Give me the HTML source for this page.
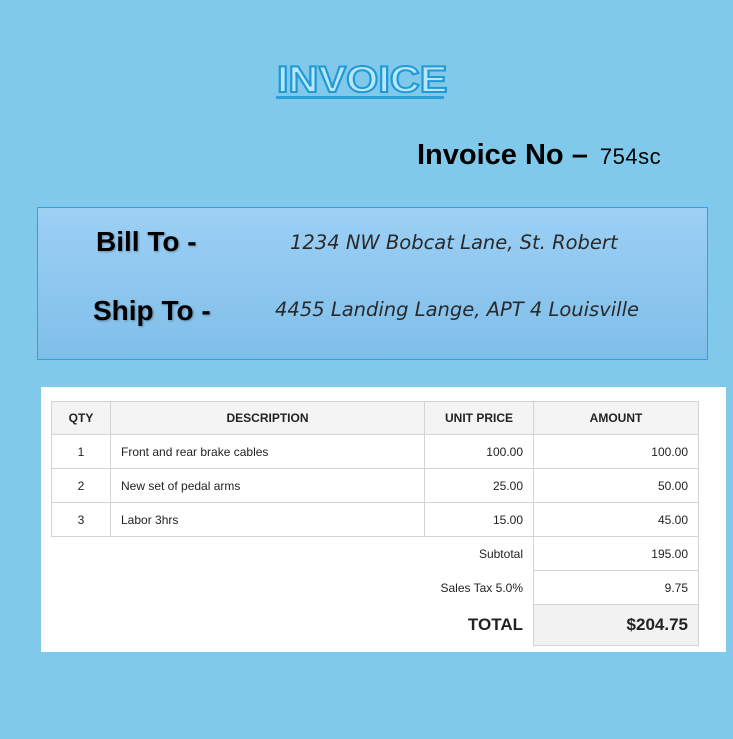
<!DOCTYPE html>
<html><head><style>
body{margin:0;width:733px;height:739px;background:#80c9ea;position:relative;overflow:hidden;font-family:"Liberation Sans",Arial,sans-serif}
.a{position:absolute;white-space:nowrap}
.title{left:277px;top:59px;font-size:37px;font-weight:900;color:#b9e6fc;-webkit-text-stroke:2px #1f9ad6;letter-spacing:0px;font-family:"Liberation Sans",sans-serif;transform:scaleX(1.12);transform-origin:left}
.uline{left:276px;top:96px;width:168px;height:3px;background:#2a9fd6}
.no{left:417px;top:139px;font-size:29px;font-weight:bold;color:#000}
.no span{font-size:22px;font-weight:normal;margin-left:4px;letter-spacing:0.5px}
.box{left:37px;top:207px;width:669px;height:151px;border:1px solid #2ba3dc;background:linear-gradient(#9dd0f5,#7fbee9)}
.lbl{font-size:28px;font-weight:bold;color:#000;text-shadow:1px 1px 2px rgba(0,0,0,.3)}
.it{font-family:"DejaVu Sans",sans-serif;font-style:italic;font-size:19.5px;color:#2a2a2a}
.wb{left:41px;top:387px;width:685px;height:265px;background:#fff}
table{position:absolute;left:51px;top:401px;border-collapse:collapse;font-size:12px;color:#222;table-layout:fixed;width:647px}
td{border:1px solid #d4d4d4;padding:0 10px;height:34px;box-sizing:border-box}
th{border:1px solid #d4d4d4;background:#f4f4f4;height:33px;font-size:12px;box-sizing:border-box}
</style></head><body>
<div class="a title">INVOICE</div>
<div class="a uline"></div>
<div class="a no">Invoice No – <span>754sc</span></div>
<div class="a box"></div>
<div class="a lbl" style="left:96px;top:226px">Bill To -</div>
<div class="a lbl" style="left:93px;top:295px">Ship To -</div>
<div class="a it" style="left:290px;top:231px">1234 NW Bobcat Lane, St. Robert</div>
<div class="a it" style="left:275px;top:298px">4455 Landing Lange, APT 4 Louisville</div>
<div class="a wb"></div>
<table>
<colgroup><col style="width:59px"><col style="width:314px"><col style="width:109px"><col style="width:165px"></colgroup>
<tr><th>QTY</th><th>DESCRIPTION</th><th>UNIT PRICE</th><th>AMOUNT</th></tr>
<tr><td style="text-align:center">1</td><td>Front and rear brake cables</td><td style="text-align:right">100.00</td><td style="text-align:right">100.00</td></tr>
<tr><td style="text-align:center">2</td><td>New set of pedal arms</td><td style="text-align:right">25.00</td><td style="text-align:right">50.00</td></tr>
<tr><td style="text-align:center">3</td><td>Labor 3hrs</td><td style="text-align:right">15.00</td><td style="text-align:right">45.00</td></tr>
<tr><td colspan="3" style="border:none;border-right:1px solid #d4d4d4;text-align:right">Subtotal</td><td style="text-align:right;border-bottom:none">195.00</td></tr>
<tr><td colspan="3" style="border:none;border-right:1px solid #d4d4d4;text-align:right">Sales Tax 5.0%</td><td style="text-align:right">9.75</td></tr>
<tr><td colspan="3" style="border:none;border-right:1px solid #d4d4d4;text-align:right;font-size:17px;font-weight:bold;height:41px">TOTAL</td><td style="text-align:right;background:#f2f2f2;font-size:17px;font-weight:bold">$204.75</td></tr>
</table>
</body></html>
